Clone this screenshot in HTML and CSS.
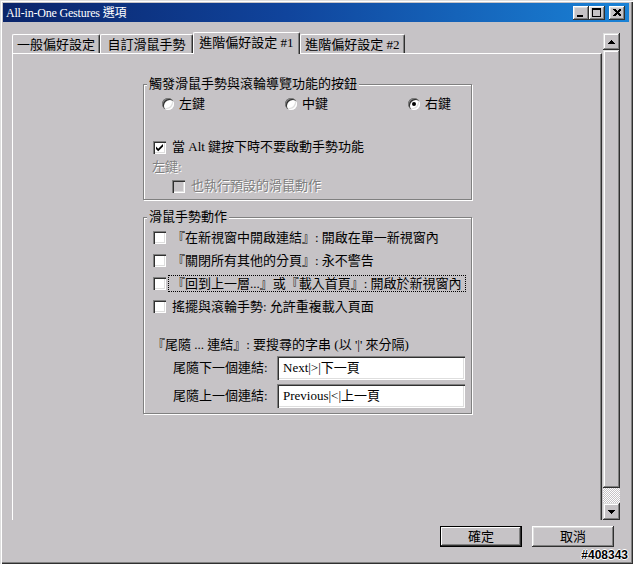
FILE: index.html
```html
<!DOCTYPE html>
<html lang="zh-Hant">
<head>
<meta charset="utf-8">
<title>All-in-One Gestures 選項</title>
<link rel="stylesheet" href="styles.css">
</head>
<body>
<div class="window">
  <div class="titlebar">
    <span class="title">All-in-One Gestures 選項</span>
    <div class="tbtns">
      <span class="tbtn"><svg width="16" height="14" viewBox="0 0 16 14" shape-rendering="crispEdges"><rect x="4" y="9" width="6" height="2" fill="#000"/></svg></span>
      <span class="tbtn"><svg width="16" height="14" viewBox="0 0 16 14" shape-rendering="crispEdges"><path d="M3 2h9v9H3z M4 4v6h7V4z" fill="#000" fill-rule="evenodd"/></svg></span>
      <span class="tbtn close"><svg width="16" height="14" viewBox="0 0 16 14" shape-rendering="crispEdges"><path d="M4 3h2l2 2 2-2h2v1l-2.5 2.5L12 9v1h-2L8 8 6 10H4V9l2.5-2.5L4 4z" fill="#000"/></svg></span>
    </div>
  </div>

  <div class="main">
    <div class="tabarea">
      <div class="tabs">
        <div class="tab t1">一般偏好設定</div>
        <div class="tab t2">自訂滑鼠手勢</div>
        <div class="tab t3 active">進階偏好設定 #1</div>
        <div class="tab t4">進階偏好設定 #2</div>
      </div>
      <div class="panel">
        <fieldset class="group g1">
          <legend>觸發滑鼠手勢與滾輪導覽功能的按鈕</legend>
          <div class="radios">
            <div class="ropt"><span class="radio"></span><span class="txt">左鍵</span></div>
            <div class="ropt"><span class="radio"></span><span class="txt">中鍵</span></div>
            <div class="ropt"><span class="radio on"></span><span class="txt">右鍵</span></div>
          </div>
          <div class="row alt">
            <span class="cb"><svg width="13" height="13" viewBox="0 0 13 13"><path d="M3 5.5v2.6l2.2 2.2 4.8-4.8V2.9L5.2 7.7z" fill="#000"/></svg></span>
            <span class="lbl">當 Alt 鍵按下時不要啟動手勢功能</span>
          </div>
          <div class="row sub disabled"><span class="txt">左鍵:</span></div>
          <div class="row indent disabled">
            <span class="cb dis"></span>
            <span class="lbl">也執行預設的滑鼠動作</span>
          </div>
        </fieldset>

        <fieldset class="group g2">
          <legend>滑鼠手勢動作</legend>
          <div class="item first"><span class="cb"></span><span class="lbl">『在新視窗中開啟連結』: 開啟在單一新視窗內</span></div>
          <div class="item"><span class="cb"></span><span class="lbl">『關閉所有其他的分頁』: 永不警告</span></div>
          <div class="item focus"><span class="cb"></span><span class="lbl">『回到上一層...』或『載入首頁』: 開啟於新視窗內</span></div>
          <div class="item"><span class="cb"></span><span class="lbl">搖擺與滾輪手勢: 允許重複載入頁面</span></div>
          <div class="note">『尾隨 ... 連結』: 要搜尋的字串 (以 '|' 來分隔)</div>
          <div class="field f1"><span class="flabel">尾隨下一個連結:</span><span class="input">Next|&gt;|下一頁</span></div>
          <div class="field f2"><span class="flabel">尾隨上一個連結:</span><span class="input">Previous|&lt;|上一頁</span></div>
        </fieldset>
      </div>
    </div>
    <div class="scrollbar">
      <span class="sbtn"><svg width="7" height="4" viewBox="0 0 7 4" shape-rendering="crispEdges"><path d="M3 0h1v1h1v1h1v1h1v1H0V3h1V2h1V1h1z" fill="#000"/></svg></span>
      <span class="thumb"></span>
      <span class="track"></span>
      <span class="sbtn"><svg width="7" height="4" viewBox="0 0 7 4" shape-rendering="crispEdges"><path d="M0 0h7v1H6v1H5v1H4v1H3V3H2V2H1V1H0z" fill="#000"/></svg></span>
    </div>
  </div>

  <div class="footer">
    <span class="btn default">確定</span>
    <span class="btn">取消</span>
  </div>
  <div class="mark">#408343</div>
</div>
</body>
</html>
```

FILE: styles.css
```css
* { box-sizing: border-box; }
html, body { margin: 0; padding: 0; background: #c6c3c6; }
body {
  font-family: "Liberation Serif", "Noto Sans CJK TC", serif;
  font-size: 13px;
  line-height: 16px;
  color: #000;
}

.window {
  width: 633px;
  height: 564px;
  background: #c6c3c6;
  padding: 3px 4px 0 3px;
  box-shadow: inset 1px 1px #dedede, inset 2px 2px #fff, inset -1px -1px #303030, inset -2px -2px #808080;
  overflow: hidden;
  display: flex;
  flex-direction: column;
}

/* title bar */
.titlebar {
  height: 19px;
  flex: none;
  display: flex;
  align-items: center;
  padding: 0 4px 0 3px;
  background: linear-gradient(90deg, #0a246a 0%, #10449c 45%, #1a82d6 100%);
  color: #fff;
}
.title { font-size: 12px; letter-spacing: -0.2px; white-space: nowrap; }
.tbtns { margin-left: auto; display: flex; }
.tbtn {
  width: 16px;
  height: 14px;
  display: block;
  background: #c6c3c6;
  box-shadow: inset -1px -1px #303030, inset 1px 1px #fff, inset -2px -2px #808080, inset 2px 2px #dedede;
}
.tbtn svg { display: block; }
.tbtn.close { margin-left: 4px; }

/* main */
.main {
  display: flex;
  align-items: flex-start;
  margin: 9px 0 0 9px;
  flex: none;
}
.tabarea { width: 590px; }
.tabs {
  height: 22px;
  display: flex;
  align-items: flex-end;
}
.tab {
  height: 19px;
  display: flex;
  align-items: center;
  justify-content: center;
  white-space: nowrap;
  background: #c6c3c6;
  border-top: 1px solid #fff;
  border-left: 1px solid #fff;
  border-right: 1px solid #303030;
  box-shadow: inset -1px 0 #808080;
  border-radius: 2px 2px 0 0;
  padding-top: 1px;
}
.t1 { width: 88px; }
.t2 { width: 93px; }
.t3 { width: 107px; }
.t4 { width: 105px; }
.tab.active {
  height: 22px;
  margin-bottom: -1px;
  padding-top: 0;
  padding-bottom: 2px;
  position: relative;
  z-index: 1;
}

.panel {
  height: 467px;
  border-top: 1px solid #fff;
  border-left: 1px solid #fff;
  border-right: 1px solid #303030;
  box-shadow: inset -1px 0 #808080;
}

/* group boxes */
.group {
  width: 329px;
  margin: 0 0 0 130px;
  padding: 0;
  min-width: 0;
  border: 1px solid #808080;
  box-shadow: inset 1px 1px #fff, 1px 1px #fff;
}
.group legend {
  height: 16px;
  line-height: 16px;
  padding: 0 2px;
  margin-left: 3px;
  background: #c6c3c6;
  white-space: nowrap;
}
.g1 { margin-top: 22px; padding-bottom: 3px; }
.g2 { margin-top: 9px; padding-bottom: 5px; }

.radios {
  display: grid;
  grid-template-columns: 123px 123px 80px;
  height: 24px;
  align-items: center;
  padding-left: 18px;
}
.ropt { display: flex; align-items: center; gap: 5px; white-space: nowrap; }
.radio {
  width: 12px;
  height: 12px;
  border-radius: 50%;
  background: #fff;
  display: flex;
  align-items: center;
  justify-content: center;
  box-shadow: inset 1px 1px 0 #808080, inset 2px 2px 0 #303030, inset -1px -1px 0 #fff, inset -2px -2px 0 #dedede;
}
.radio.on::after {
  content: "";
  width: 4px;
  height: 4px;
  border-radius: 50%;
  background: #000;
}

.row { display: flex; align-items: center; height: 20px; white-space: nowrap; }
.alt { margin-top: 21px; padding-left: 9px; }
.sub { height: 19px; padding-left: 8px; }
.indent { padding-left: 28px; }

.cb {
  flex: none;
  width: 13px;
  height: 13px;
  background: #fff;
  box-shadow: inset 1px 1px #808080, inset 2px 2px #303030, inset -1px -1px #fff, inset -2px -2px #dedede;
}
.cb svg { display: block; }
.cb.dis { background: #c6c3c6; }

.lbl {
  margin-left: 2px;
  padding: 0 3px;
  border: 1px solid transparent;
  height: 17px;
  display: flex;
  align-items: center;
  white-space: nowrap;
}
.disabled { color: #808080; text-shadow: 1px 1px 0 #fff; }

.item {
  height: 23px;
  display: flex;
  align-items: center;
  padding-left: 9px;
}
.item.first { margin-top: 1px; }
.item.focus .lbl { border: 1px dotted #000; }

.note {
  margin-top: 17px;
  height: 20px;
  display: flex;
  align-items: center;
  padding-left: 8px;
  white-space: nowrap;
}

.field {
  height: 24px;
  display: flex;
  align-items: center;
  padding-left: 29px;
}
.f1 { margin-top: 1px; }
.f2 { margin-top: 4px; }
.flabel { width: 104px; white-space: nowrap; }
.input {
  width: 188px;
  height: 24px;
  background: #fff;
  display: flex;
  align-items: center;
  padding-left: 6px;
  white-space: nowrap;
  box-shadow: inset 1px 1px #808080, inset 2px 2px #303030, inset -1px -1px #fff, inset -2px -2px #dedede;
}

/* scrollbar */
.scrollbar {
  width: 17px;
  height: 487px;
  margin: 2px 0 0 1px;
  display: flex;
  flex-direction: column;
}
.sbtn, .thumb {
  background: #c6c3c6;
  box-shadow: inset -1px -1px #303030, inset 1px 1px #dedede, inset -2px -2px #808080, inset 2px 2px #fff;
}
.sbtn {
  height: 17px;
  flex: none;
  display: flex;
  align-items: center;
  justify-content: center;
}
.sbtn svg { display: block; }
.thumb { height: 438px; flex: none; }
.track {
  height: 15px;
  flex: none;
  background: repeating-conic-gradient(#fff 0 25%, #c6c3c6 0 50%) 0 0 / 2px 2px;
}

/* footer */
.footer {
  display: flex;
  justify-content: flex-end;
  gap: 10px;
  margin-top: 6px;
  padding-right: 15px;
  flex: none;
}
.btn {
  width: 82px;
  height: 21px;
  display: flex;
  align-items: center;
  justify-content: center;
  background: #c6c3c6;
  box-shadow: inset -1px -1px #303030, inset 1px 1px #fff, inset -2px -2px #808080, inset 2px 2px #dedede;
}
.btn.default {
  border: 1px solid #000;
  box-shadow: inset -1px -1px #303030, inset 1px 1px #fff, inset -2px -2px #808080;
}

.mark {
  margin-top: 2px;
  padding-right: 1px;
  text-align: right;
  font-family: "Liberation Sans", sans-serif;
  font-weight: bold;
  font-size: 12px;
  line-height: 13px;
  color: #000;
  text-shadow: -1px 0 #fff, 1px 0 #fff, 0 -1px #fff, 0 1px #fff;
}
```
